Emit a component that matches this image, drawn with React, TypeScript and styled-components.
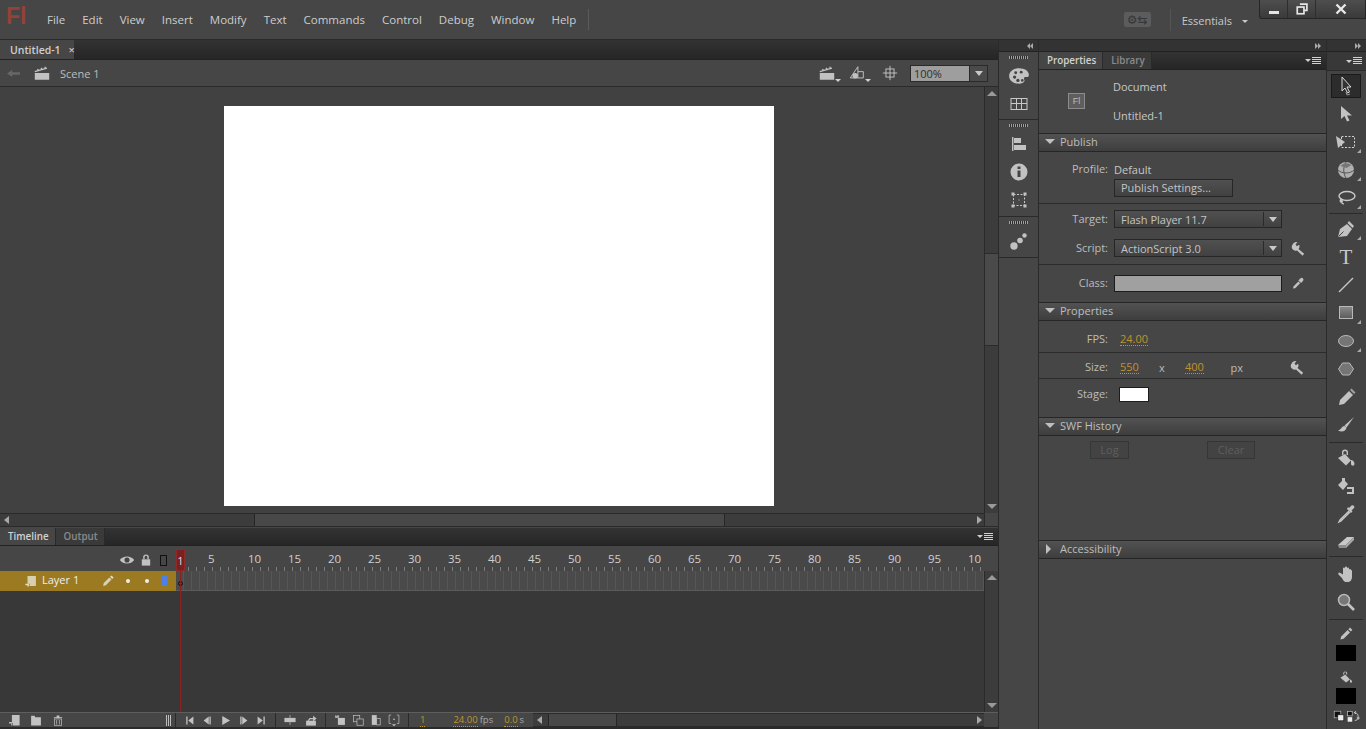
import React, { FC, ReactNode } from 'react';
import styled, { createGlobalStyle } from 'styled-components';

const GlobalStyle = createGlobalStyle`
    html, body {
        margin: 0;
        padding: 0;
        background: #464646;
        overflow: hidden;
    }
    * {
        box-sizing: border-box;
    }
`;

const FONT = `"Open Sans", "Noto Sans", sans-serif`;
const TEXT = '#c6c6c6';
const AMBER = '#c0922e';

const Root = styled.div`
    width: 1366px;
    height: 729px;
    display: flex;
    flex-direction: column;
    overflow: hidden;
    background: #464646;
    color: ${TEXT};
    font: 12px ${FONT};
`;

/* ---------- drawings ---------- */

const Svg = styled.svg<{ $size?: number }>`
    position: relative;
    width: ${(p) => p.$size ?? 20}px;
    height: ${(p) => p.$size ?? 20}px;
    display: block;
    flex: none;
    fill: #c2c2c2;
`;

const icons: Record<string, ReactNode> = {
    select: <><path d="M6 1v14l3-3 2.500 5 2-1-2.500-5h4z" fill="#333" stroke="#d8d8d8" /><path d="M10 16l1 3 3-1" fill="none" stroke="#999" /></>,
    subselect: <path d="M5 2v13l3.500-3 2.500 5.500 2.500-1-2.500-5h5z" />,
    transform: <><path d="M0 4l9 6-7 6z" /><rect x="5.500" y="4.500" width="13" height="11" fill="none" stroke="#d0d0d0" strokeDasharray="2 1.500" /></>,
    sphere: <><circle cx="10" cy="10" r="8" fill="#b0b0b0" /><path d="M2 10c4 4 12 4 16 0M10 2c-3 5-3 11 0 16" fill="none" stroke="#555" strokeWidth="1" /><path d="M4.500 6a8 8 0 0 1 11-1l-5 3z" fill="#777" /></>,
    lasso: <><ellipse cx="11" cy="8" rx="8" ry="4.500" fill="none" stroke="#c8c8c8" strokeWidth="1.400" /><path d="M5 11c-2 2 0 4 1 3s-1-3-1-3c0 3 1 5 3 5" fill="none" stroke="#c8c8c8" strokeWidth="1.200" /></>,
    pen: <><path d="M2 18l2-8 7-5 5 5-5 7z" /><path d="M13 2l5 5-1.500 2-5-5z" /><path d="M2.500 17.500l5-5" stroke="#444" /></>,
    line: <path d="M3 17L17 3" stroke="#c4c4c4" strokeWidth="1.400" />,
    rect: <><defs><linearGradient id="rectFill" x1="0" y1="0" x2="0" y2="1"><stop offset="0" stopColor="#8a8a8a" /><stop offset="1" stopColor="#5c5c5c" /></linearGradient></defs><rect x="3.500" y="3.500" width="13" height="12" fill="url(#rectFill)" stroke="#b8b8b8" /></>,
    oval: <ellipse cx="10" cy="10" rx="7.500" ry="5.500" fill="#757575" stroke="#b8b8b8" />,
    poly: <path d="M6.500 4h7l4 6-4 6h-7l-4-6z" fill="#757575" stroke="#b8b8b8" />,
    pencil: <><path d="M3 18l1-5L13 4l4 4-9 9z" /><path d="M14 3l1.500-1.500 4 4L18 7z" fill="#a0a0a0" /></>,
    brush: <><path d="M18 2L8.500 10.500l2 2z" /><path d="M8.500 11c-3 0-3 3.500-6.500 4.500 3.500 2 8 1 8.500-3z" /></>,
    bucket: <><path d="M9 1.500a3 3 0 0 1 3 3V7h-1.400V4.500a1.600 1.600 0 0 0-3.200 0V7H6V4.500a3 3 0 0 1 3-3z" /><path d="M2 10l7-4 6 6.500-5 5z" /><path d="M15 12c2 0 3.500 2 3.500 4a1.700 1.700 0 0 1-3.500 0z" /></>,
    ink: <><path d="M6 2h3v3l3 3-5 6-5-5 4-4z" /><path d="M11 11h7v7h-7v-2h5v-3h-5z" /></>,
    dropper: <><path d="M13 7l-9 9-1 2 2-1 9-9" fill="none" stroke="#c8c8c8" strokeWidth="1.300" /><path d="M11 5l4 4 1.500-1.500-1-1L18 4a1.800 1.800 0 0 0-2.500-2.500L13 4l-1-1z" /></>,
    eraser: <><path d="M2 13L11 5h7l-8 8z" fill="#c8c8c8" /><path d="M2 13h8v3H3z" fill="#8c8c8c" /><path d="M10 13l8-8v3l-8 8z" fill="#a8a8a8" /></>,
    hand: <path d="M3.500 8.500l3.500 2V4.500a1 1 0 0 1 2 0v-1a1 1 0 0 1 2 0v1a1 1 0 0 1 2 0V6a1 1 0 0 1 2 0c1 0 1 1 1 1v6c0 3-2 5-4 5H10c-2 0-3-2-4-4l-3.500-3.500c-.7-1 .2-2.200 1-2z" />,
    zoom: <><circle cx="8" cy="8" r="5.500" fill="#777" stroke="#b8b8b8" strokeWidth="1.500" /><path d="M12 12l6 6" stroke="#c4c4c4" strokeWidth="2.600" /></>,
    penSmall: <><path d="M3 17l1-4L12 5l3 3-8 8z" /><path d="M13 4l2-2 3 3-2 2z" /></>,
    bucketSmall: <><path d="M9 3a2.500 2.500 0 0 1 2.500 2.500V7h-1.200V5.500a1.300 1.300 0 0 0-2.600 0V7H6.500V5.500A2.500 2.500 0 0 1 9 3z" /><path d="M3 11l6-4 6 6-5 4z" /><path d="M15 13c1.500 0 2.500 1.500 2.500 3a1.200 1.200 0 0 1-2.500 0z" /></>,
    palette: <><path d="M10 3c5 0 9 2.500 9 6 0 2-2 2-3 2-2 0-1.500 2-1 3 0 2-3 3-5 3-5 0-9-3-9-7s4-7 9-7z" /><circle cx="6" cy="11" r="1.500" fill="#444" /><circle cx="9" cy="14" r="1.500" fill="#444" /><circle cx="13" cy="14" r="1.200" fill="#444" /><circle cx="7" cy="7" r="1.300" fill="#444" /><circle cx="12" cy="6.500" r="1.300" fill="#444" /></>,
    swatches: <><rect x="2" y="4.500" width="16" height="11" fill="none" stroke="#c8c8c8" /><path d="M2 9.500h16M7.500 4.500v11M12.500 4.500v11" stroke="#c8c8c8" /></>,
    align: <><rect x="3" y="3" width="1.400" height="14" /><rect x="5" y="4" width="7" height="5" /><rect x="5" y="11" width="12" height="5" /></>,
    info: <><circle cx="10" cy="10" r="8.500" /><rect x="8.500" y="8.500" width="3" height="6.500" fill="#444" /><rect x="8.500" y="4.500" width="3" height="2.500" fill="#444" /></>,
    bounds: <><rect x="4.500" y="4.500" width="11" height="11" fill="none" stroke="#c8c8c8" strokeDasharray="2 1.500" /><rect x="2.500" y="2.500" width="3" height="3" /><rect x="14.500" y="2.500" width="3" height="3" /><rect x="2.500" y="14.500" width="3" height="3" /><rect x="14.500" y="14.500" width="3" height="3" /><rect x="9.500" y="9.500" width="1" height="1" /></>,
    motion: <><circle cx="5" cy="15" r="3.700" /><circle cx="11" cy="9.500" r="2.800" /><circle cx="15.500" cy="4.500" r="2.200" /></>,
    clapper: <><rect x="2" y="10" width="16" height="7.500" /><path d="M2 8.500L15.500 4.500M5 5.500l1 1.800M9 4.300l1 1.800M13 3l1 1.800" stroke="#c2c2c2" strokeWidth="1.400" /></>,
    back: <path d="M0 10l8-5.500V8h12v4H8v3.500z" fill="#676767" />,
    wrench: <path d="M2 5a5 5 0 0 1 6.500-3.200L6 4.500 7.800 7l3-2a5 5 0 0 1-.8 5.500l7.500 6.500-2 2.500-7.500-7A5 5 0 0 1 2 5z" />,
    dropSmall: <><path d="M3 18l.5-3 7-7 2.500 2.500-7 7z" /><path d="M10.500 6.500L14 3a2.600 2.600 0 0 1 3.500 3.500l-3 3.500z" /></>,
    crosshair: <><rect x="5.500" y="5.500" width="9" height="9" fill="none" stroke="#c8c8c8" /><path d="M10 2v16M2 10h16" stroke="#c8c8c8" /></>,
    snap: <><path d="M2.500 15.500L11 3v12.500z" fill="none" stroke="#c8c8c8" /><circle cx="8" cy="13" r="3" /><path d="M11 8.500h6v7h-6" fill="none" stroke="#c8c8c8" /></>,
    eye: <><path d="M1 10c4-6 14-6 18 0-4 6-14 6-18 0z" /><circle cx="10" cy="10" r="3.200" fill="#444" /></>,
    lock: <><path d="M6 9V6a4 4 0 0 1 8 0v3h-2V6a2 2 0 0 0-4 0v3z" /><rect x="4" y="9" width="12" height="9" /></>,
    layer: <><path d="M5 3h12v14H8v-3H5z" fill="#d8cfae" /><path d="M2 14h5v4H5v-2H2z" fill="#e4ddc4" /></>,
    pencilTl: <><path d="M3 17l1-4 8-8 3 3-8 8z" fill="#d8d0b8" /><path d="M13 4l2-2 3 3-2 2z" fill="#e4ddc8" /></>,
    newLayer: <><path d="M7 3h11v15H8v-4H7z" /><path d="M3 13h4v5H6v-3H3z" /></>,
    folder: <path d="M3 4h5l1 2h8v12H3z" />,
    trash: <><path d="M4 6h12v1.500H4zM8 3.500h4V6H8z" /><path d="M5 8.500h10V18H5zM8 10v6.500M12 10v6.500" fill="none" stroke="#c2c2c2" /></>,
    toStart: <path d="M5 4h2v12H5zM16 4v12L8 10z" />,
    stepBack: <path d="M13 4h2v12h-2zM12 4v12L4 10z" />,
    play: <path d="M5 3l12 7-12 7z" />,
    stepFwd: <path d="M5 4h2v12H5zM8 4v12l8-6z" />,
    toEnd: <path d="M13 4h2v12h-2zM4 4v12l8-6z" />,
    center: <><path d="M10 3v14" stroke="#c2c2c2" /><rect x="2" y="7" width="16" height="6" /></>,
    loop: <><path d="M3 11h14v7H3z" /><path d="M5 11l3-4h5V4l5 4-5 4V9H9l-2 2z" /></>,
    onion: <><path d="M3 3l2 1 3-1 1 2-1 2H3z" fill="#aaa" /><rect x="7" y="7" width="10" height="10" /></>,
    onionLine: <><rect x="3.500" y="3.500" width="9" height="9" fill="none" stroke="#c2c2c2" /><rect x="8.500" y="8.500" width="9" height="9" fill="#464646" stroke="#c2c2c2" /></>,
    editMulti: <><rect x="4" y="3" width="7" height="14" /><rect x="11" y="8" width="5" height="9" fill="none" stroke="#c2c2c2" /></>,
    markers: <><path d="M6 3H3v12h3M14 3h3v12h-3" fill="none" stroke="#c2c2c2" /><rect x="9" y="8" width="2" height="2" /><path d="M7 16h6l-3 3z" /></>,
    restore: <><path d="M7 3h10v9h-4" fill="none" stroke="#e6e6e6" strokeWidth="2.400" /><rect x="3.200" y="7.200" width="9.600" height="9.600" fill="none" stroke="#e6e6e6" strokeWidth="2.400" /></>,
    swapColors: <><rect x="2" y="2" width="11" height="11" fill="#111" stroke="#ccc" /><rect x="8" y="8" width="10" height="10" fill="#eee" stroke="#111" /></>,
    swapArrows: <><rect x="1" y="2" width="7" height="7" fill="#111" stroke="#ccc" /><rect x="1" y="11" width="7" height="7" fill="#eee" /><path d="M11 4c5 0 7 4 6 8M12 16c3 0 4-1 5-4M14 2l-3 2 3 2M15 12h4l-2 3" fill="none" stroke="#ccc" strokeWidth="1.400" /></>,
};

const Icon: FC<{ name: string; size?: number }> = ({ name, size }) => (
    <Svg viewBox="0 0 20 20" $size={size}>{icons[name]}</Svg>
);

/* ---------- menu bar ---------- */

const MenuBar = styled.div`
    height: 40px;
    flex: none;
    display: flex;
    align-items: flex-start;
    background: #464646;
    border-bottom: 1px solid #2a2a2a;
`;

const Logo = styled.span`
    width: 47px;
    padding: 3px 0 0 6px;
    font: bold 23px "Liberation Sans", sans-serif;
    color: #944236;
`;

const Menu = styled.nav`
    display: flex;
    gap: 17px;
    height: 39px;
    align-items: center;
    padding-right: 12px;
`;

const MenuItem = styled.span`
    font-size: 11.500px;
    color: #cdcdcd;
`;

const MenuRule = styled.i`
    width: 1px;
    height: 21px;
    margin-top: 9px;
    background: #5a5a5a;
`;

const MenuSpacer = styled.div`
    flex: 1;
`;

const SyncBadge = styled.div`
    width: 27px;
    height: 15px;
    margin: 12px 19px 0 0;
    border-radius: 2px;
    background: #5c5c5c;
    display: flex;
    align-items: center;
    justify-content: center;
    color: #353535;
    font: 12px "DejaVu Sans", sans-serif;
`;

const Workspaces = styled.div`
    display: flex;
    align-items: center;
    gap: 10px;
    height: 22px;
    margin: 9px 11px 0 0;
    padding-left: 11px;
    border-left: 1px solid #555;
    font-size: 11px;
    color: #c8c8c8;
`;

const SmallCaret = styled.i`
    width: 0;
    height: 0;
    margin-top: 3px;
    border: 3px solid transparent;
    border-top: 3px solid #c8c8c8;
    border-bottom: none;
`;

const WindowButtons = styled.div`
    display: flex;
    height: 19px;
    border: 1px solid #262626;
    border-top: none;
    border-radius: 0 0 0 3px;
    background: linear-gradient(#4e4e4e, #3a3a3a);
`;

const WindowButton = styled.div<{ $wide?: boolean }>`
    width: ${(p) => (p.$wide ? 49 : 28)}px;
    display: flex;
    align-items: center;
    justify-content: center;
    border-right: 1px solid #2e2e2e;
    &:last-child {
        border-right: none;
    }
`;

const MinGlyph = styled.i`
    width: 10px;
    height: 3px;
    margin-top: 6px;
    background: #e4e4e4;
`;

/* ---------- left column ---------- */

const Workspace = styled.div`
    flex: 1;
    min-height: 0;
    display: flex;
`;

const DocColumn = styled.main`
    width: 999px;
    flex: none;
    display: flex;
    flex-direction: column;
    border-right: 1px solid #2a2a2a;
`;

const TabStrip = styled.div<{ $height: number }>`
    height: ${(p) => p.$height}px;
    flex: none;
    display: flex;
    align-items: stretch;
    background: linear-gradient(#333, #262626);
    border-bottom: 1px solid #222;
`;

const DocTab = styled.div`
    width: 74px;
    padding-left: 10px;
    display: flex;
    align-items: center;
    gap: 8px;
    background: #464646;
    font-size: 10.500px;
    font-weight: 600;
    white-space: nowrap;
    color: #cfcfcf;
`;

const TabClose = styled.span`
    font-size: 11px;
    color: #c4c4c4;
`;

const SceneBar = styled.div`
    height: 27px;
    flex: none;
    display: flex;
    align-items: center;
    padding: 0 10px 0 7px;
    background: #464646;
    border-bottom: 1px solid #2a2a2a;
    font-size: 11px;
`;

const BackSlot = styled.span`
    display: block;
    margin-right: 13px;
`;

const SceneName = styled.span`
    margin-left: 9px;
    color: #bdbdbd;
`;

const SceneTools = styled.div`
    margin-left: auto;
    display: flex;
    align-items: center;
    gap: 10px;
`;

const IconCaret = styled.span<{ $after: number }>`
    position: relative;
    display: block;
    margin-right: ${(p) => p.$after}px;
    &::after {
        content: '';
        position: absolute;
        right: -5px;
        bottom: 0;
        border: 3px solid transparent;
        border-top: 3px solid #d0d0d0;
        border-bottom: none;
    }
`;

const ZoomCombo = styled.div`
    width: 78px;
    height: 17px;
    margin-left: 1px;
    display: flex;
    border: 1px solid #2a2a2a;
    background: #9e9e9e;
    color: #2e2e2e;
    font-size: 11px;
    line-height: 15px;
    padding-left: 3px;
`;

const ZoomButton = styled.div`
    width: 18px;
    margin-left: auto;
    display: flex;
    align-items: center;
    justify-content: center;
    background: #4a4a4a;
    border-left: 1px solid #2a2a2a;
`;

const DownCaret = styled.i<{ $color?: string }>`
    width: 0;
    height: 0;
    border: 4px solid transparent;
    border-top: 5px solid ${(p) => p.$color ?? '#c8c8c8'};
    border-bottom: none;
`;

const StageRow = styled.div`
    height: 426px;
    flex: none;
    display: flex;
    background: #414141;
`;

const Pasteboard = styled.div`
    flex: 1;
    padding: 19px 0 0 224px;
`;

const Artboard = styled.div`
    width: 550px;
    height: 400px;
    background: #fff;
`;

const VScroll = styled.div`
    width: 14px;
    flex: none;
    display: flex;
    flex-direction: column;
    align-items: center;
    justify-content: space-between;
    padding: 4px 0;
    background: #3c3c3c;
    border-left: 1px solid #2a2a2a;
    position: relative;
`;

const VThumb = styled.div`
    position: absolute;
    left: 0;
    right: 0;
    top: 166px;
    height: 93px;
    background: #4a4a4a;
    border-top: 1px solid #2c2c2c;
    border-bottom: 1px solid #2c2c2c;
`;

const UpTri = styled.i`
    width: 0;
    height: 0;
    border: 5px solid transparent;
    border-bottom: 5px solid #9a9a9a;
    border-top: none;
`;

const DownTri = styled.i`
    width: 0;
    height: 0;
    border: 5px solid transparent;
    border-top: 5px solid #9a9a9a;
    border-bottom: none;
`;

const HScroll = styled.div`
    height: 14px;
    flex: 1;
    display: flex;
    align-items: center;
    background: #3c3c3c;
    border-top: 1px solid #2a2a2a;
    border-bottom: 1px solid #2a2a2a;
    padding: 0 2px 0 4px;
`;

const HThumb = styled.div<{ $offset: number; $width: number }>`
    width: ${(p) => p.$width}px;
    height: 12px;
    margin-left: ${(p) => p.$offset}px;
    background: #484848;
    border-left: 1px solid #262626;
    border-right: 1px solid #262626;
`;

const LeftTri = styled.i`
    width: 0;
    height: 0;
    flex: none;
    border: 4px solid transparent;
    border-right: 5px solid #a8a8a8;
    border-left: none;
`;

const RightTri = styled.i`
    width: 0;
    height: 0;
    flex: none;
    margin-left: auto;
    border: 4px solid transparent;
    border-left: 5px solid #a8a8a8;
    border-right: none;
`;

const HScrollRow = styled.div`
    height: 14px;
    flex: none;
    display: flex;
    background: #464646;
    border-bottom: 1px solid #2a2a2a;
`;

const Corner = styled.div`
    width: 14px;
    flex: none;
    background: #464646;
    border-left: 1px solid #2a2a2a;
`;

const StageGap = styled.div`
    height: 1px;
    flex: none;
    background: #464646;
`;

/* ---------- timeline ---------- */

const PanelTab = styled.div<{ $active?: boolean }>`
    padding: 0 6px 0 8px;
    display: flex;
    align-items: center;
    background: ${(p) => (p.$active ? '#464646' : '#3a3a3a')};
    border-right: 1px solid #2a2a2a;
    font-size: 9.800px;
    font-weight: 600;
    color: ${(p) => (p.$active ? '#d2d2d2' : '#8a8a8a')};
`;

const PanelMenu = styled.div`
    margin-left: auto;
    padding: 0 5px;
    display: flex;
    align-items: center;
`;

const MenuLines = styled.i`
    width: 9px;
    height: 8px;
    margin-left: 1px;
    background: repeating-linear-gradient(#d0d0d0 0 1px, transparent 1px 2px);
`;

const MenuTri = styled.i`
    width: 0;
    height: 0;
    border: 3px solid transparent;
    border-top: 3px solid #d0d0d0;
    border-bottom: none;
`;

const TimelineBody = styled.div`
    flex: 1;
    min-height: 0;
    position: relative;
    display: flex;
    flex-direction: column;
    background: #383838;
`;

const RulerRow = styled.div`
    height: 25px;
    flex: none;
    display: flex;
    background: #464646;
`;

const LayerHead = styled.div`
    width: 176px;
    flex: none;
    display: flex;
    align-items: center;
    justify-content: flex-end;
    gap: 4px;
    padding: 3px 9px 0 0;
`;

const OutlineBox = styled.i`
    width: 7px;
    height: 11px;
    margin-left: 3px;
    border: 1px solid #111;
`;

const Ruler = styled.div`
    width: 808px;
    overflow: hidden;
    display: flex;
    color: #cfcfcf;
    font-size: 11.500px;
    line-height: 26px;
    background: repeating-linear-gradient(90deg, transparent 0 4px, #7c7c7c 4px 5px, transparent 5px 8px) 0 21px / 100% 4px no-repeat;
`;

const RulerMark = styled.span<{ $first?: boolean }>`
    flex: none;
    width: ${(p) => (p.$first ? 32 : 40)}px;
`;

const TrackArea = styled.div`
    flex: 1;
    min-height: 0;
    display: flex;
`;

const TrackList = styled.div`
    flex: 1;
`;

const LayerRow = styled.div`
    height: 20px;
    display: flex;
`;

const LayerName = styled.div`
    width: 176px;
    flex: none;
    display: flex;
    align-items: center;
    padding: 0 0 1px 24px;
    background: #9b7a22;
    color: #eee;
    font-size: 11px;
`;

const LayerLabel = styled.span`
    width: 59px;
    margin: 0 0 2px 4px;
`;

const Dot = styled.i<{ $gap: number }>`
    width: 4px;
    height: 4px;
    margin-left: ${(p) => p.$gap}px;
    border-radius: 50%;
    background: #eee;
`;

const OutlineChip = styled.i`
    width: 5px;
    height: 10px;
    margin-left: 13px;
    background: #4f80e8;
`;

const Frames = styled.div`
    width: 808px;
    border-bottom: 1px solid #5a5a5a;
    background: repeating-linear-gradient(90deg, #4a4a4a 0 7px, #565656 7px 8px);
`;

const FirstKey = styled.i`
    display: block;
    width: 5px;
    height: 5px;
    margin: 10px 0 0 2px;
    border-radius: 50%;
    border: 1px solid #111;
`;

const PlayHead = styled.div`
    position: absolute;
    left: 176px;
    top: 3px;
    width: 9px;
    height: 22px;
    background: #7a2020;
    border: 1px solid #8e2a2a;
    color: #ddd;
    font-size: 11px;
    line-height: 21px;
    text-align: center;
    &::after {
        content: '';
        position: absolute;
        left: 3px;
        top: 20px;
        width: 1px;
        height: 142px;
        background: #8a2020;
    }
`;

const Footer = styled.div`
    height: 15px;
    flex: none;
    display: flex;
    align-items: center;
    background: #464646;
    border-top: 1px solid #5e5e5e;
`;

const FooterLeft = styled.div`
    width: 176px;
    height: 100%;
    flex: none;
    display: flex;
    align-items: center;
    gap: 8px;
    padding-left: 7px;
    border-right: 1px solid #2a2a2a;
`;

const Grip = styled.i`
    width: 5px;
    height: 11px;
    margin-left: auto;
    margin-right: 4px;
    background: repeating-linear-gradient(90deg, #bdbdbd 0 1px, transparent 1px 2px);
`;

const FooterGroup = styled.div<{ $gap: number; $pad: number }>`
    height: 100%;
    display: flex;
    align-items: center;
    gap: ${(p) => p.$gap}px;
    padding: 0 ${(p) => p.$pad}px;
    border-right: 1px solid #2a2a2a;
`;

const HotText = styled.span<{ $left?: number }>`
    margin-left: ${(p) => p.$left ?? 0}px;
    color: ${AMBER};
    border-bottom: 1px dotted ${AMBER};
    line-height: 12px;
`;

const Unit = styled.span`
    color: #a8a8a8;
    line-height: 12px;
    margin-left: 2px;
`;

const FrameInfo = styled.div`
    width: 124px;
    height: 100%;
    flex: none;
    display: flex;
    align-items: center;
    padding-left: 11px;
    font-size: 9.500px;
`;

const Bottom = styled.div`
    height: 2px;
    flex: none;
    background: #2a2a2a;
`;

/* ---------- icon dock ---------- */

const CollapseStrip = styled.div`
    height: 12px;
    flex: none;
    display: flex;
    align-items: center;
    justify-content: flex-end;
    padding-right: 5px;
    background: #333;
    border-bottom: 1px solid #222;
`;

const Tiny = styled.i<{ $left?: boolean }>`
    width: 0;
    height: 0;
    border: 3px solid transparent;
    ${(p) => (p.$left
        ? 'border-right: 3px solid #aaa; border-left: none;'
        : 'border-left: 3px solid #aaa; border-right: none;')}
`;

const Dock = styled.aside`
    width: 40px;
    flex: none;
    display: flex;
    flex-direction: column;
    border-right: 1px solid #2a2a2a;
`;

const DockGroup = styled.div<{ $height: number }>`
    height: ${(p) => p.$height}px;
    flex: none;
    display: flex;
    flex-direction: column;
    align-items: center;
    border-bottom: 1px solid #2a2a2a;
    padding-top: 4px;
`;

const Gripper = styled.i`
    width: 19px;
    height: 3px;
    margin-bottom: 3px;
    flex: none;
    background: repeating-linear-gradient(90deg, #a0a0a0 0 1px, #2c2c2c 1px 2px);
`;

const DockItem = styled.div`
    height: 28px;
    display: flex;
    align-items: center;
`;

/* ---------- properties ---------- */

const Panel = styled.section`
    width: 288px;
    flex: none;
    display: flex;
    flex-direction: column;
    border-right: 1px solid #2a2a2a;
`;

const DocSummary = styled.div`
    height: 63px;
    flex: none;
    display: flex;
    align-items: center;
    padding: 0 0 2px 29px;
`;

const FileBadge = styled.div`
    width: 17px;
    height: 16px;
    border: 1px solid #8c8c8c;
    background: #5e5e5e;
    color: #bbb;
    font: 9px/14px "Liberation Sans", sans-serif;
    text-align: center;
`;

const DocLines = styled.div`
    margin-left: 28px;
    display: flex;
    flex-direction: column;
    gap: 12px;
    font-size: 11px;
    line-height: 17px;
`;

const SectionHead = styled.div`
    height: 19px;
    flex: none;
    display: flex;
    align-items: center;
    gap: 4px;
    padding: 0 0 2px 5px;
    background: linear-gradient(#525252, #3e3e3e);
    border-top: 1px solid #262626;
    border-bottom: 1px solid #262626;
    font-size: 11px;
    color: #bebebe;
`;

const OpenTri = styled.i`
    width: 0;
    height: 0;
    margin: 0 1px;
    border: 5px solid transparent;
    border-top: 5px solid #c0c0c0;
    border-bottom: none;
`;

const ClosedTri = styled.i`
    width: 0;
    height: 0;
    margin: 0 5px 0 2px;
    border: 5px solid transparent;
    border-left: 5px solid #c0c0c0;
    border-right: none;
`;

const Block = styled.div<{ $height: number; $top: number; $gap?: number; $last?: boolean }>`
    height: ${(p) => p.$height}px;
    flex: none;
    display: flex;
    flex-direction: column;
    gap: ${(p) => p.$gap ?? 0}px;
    padding-top: ${(p) => p.$top}px;
    border-bottom: ${(p) => (p.$last ? 'none' : '1px solid #2c2c2c')};
`;

const FieldRow = styled.div<{ $height?: number }>`
    display: flex;
    align-items: center;
    flex: none;
    height: ${(p) => p.$height ?? 18}px;
    font-size: 11px;
`;

const FieldLabel = styled.span`
    width: 69px;
    flex: none;
    text-align: right;
    margin: 0 6px 2px 0;
    color: #bcbcbc;
`;

const PlainButton = styled.div<{ $width: number; $disabled?: boolean }>`
    width: ${(p) => p.$width}px;
    height: 18px;
    border: 1px solid ${(p) => (p.$disabled ? '#363636' : '#262626')};
    background: ${(p) => (p.$disabled ? '#434343' : 'linear-gradient(#505050, #414141)')};
    color: ${(p) => (p.$disabled ? '#5e5e5e' : '#c4c4c4')};
    font-size: 11px;
    line-height: 16px;
    padding-left: ${(p) => (p.$disabled ? 0 : 6)}px;
    text-align: ${(p) => (p.$disabled ? 'center' : 'left')};
`;

const Select = styled.div`
    width: 168px;
    height: 18px;
    display: flex;
    align-items: center;
    padding-left: 6px;
    border: 1px solid #262626;
    background: linear-gradient(#505050, #414141);
    color: #c4c4c4;
    font-size: 11px;
`;

const SelectCaret = styled.div`
    margin-left: auto;
    width: 18px;
    height: 14px;
    display: flex;
    align-items: center;
    justify-content: center;
    border-left: 1px solid #2a2a2a;
`;

const SideIcon = styled.span<{ $left?: number }>`
    display: block;
    margin-left: ${(p) => p.$left ?? 9}px;
`;

const ClassField = styled.div`
    width: 168px;
    height: 17px;
    border: 1px solid #1c1c1c;
    background: #a0a0a0;
`;

const SizeSep = styled.span<{ $width: number }>`
    width: ${(p) => p.$width}px;
    text-align: center;
    color: #bcbcbc;
`;

const StageSwatch = styled.div`
    width: 30px;
    height: 15px;
    margin-left: 5px;
    border: 1px solid #1c1c1c;
    background: #fff;
`;

const HistoryBody = styled.div`
    height: 104px;
    flex: none;
    display: flex;
    padding: 5px 0 0 51px;
    gap: 78px;
`;

/* ---------- tools ---------- */

const Tools = styled.aside`
    flex: 1;
    min-width: 0;
    display: flex;
    flex-direction: column;
    background: #434343;
`;

const ToolsHead = styled.div`
    height: 19px;
    flex: none;
    display: flex;
    justify-content: flex-end;
    align-items: center;
    padding-right: 4px;
    background: #383838;
    border-bottom: 1px solid #2a2a2a;
`;

const ToolGroup = styled.div<{ $height: number; $top: number; $last?: boolean }>`
    height: ${(p) => p.$height}px;
    flex: none;
    display: flex;
    flex-direction: column;
    align-items: center;
    padding-top: ${(p) => p.$top}px;
    border-bottom: ${(p) => (p.$last ? 'none' : '1px solid #2a2a2a')};
    margin: 0 3px 0 2px;
`;

const Tool = styled.div<{ $active?: boolean; $corner?: boolean }>`
    position: relative;
    width: 30px;
    height: 28px;
    flex: none;
    display: flex;
    align-items: center;
    justify-content: center;
    ${(p) => p.$active && `
        &::before {
            content: '';
            position: absolute;
            inset: 2px 0;
            background: #2c2c2c;
            border: 1px solid #1a1a1a;
        }
    `}
    ${(p) => p.$corner && `
        &::after {
            content: '';
            position: absolute;
            right: 0;
            bottom: 3px;
            border-left: 4px solid transparent;
            border-bottom: 4px solid #aaa;
        }
    `}
`;

const SerifT = styled.span`
    font: 21px "Liberation Serif", serif;
    color: #c8c8c8;
`;

const ColorSlot = styled.div`
    height: 20px;
    flex: none;
    display: flex;
    align-items: center;
`;

const ColorChip = styled.div`
    width: 20px;
    height: 16px;
    flex: none;
    background: #000;
    margin: 1px 0 6px;
`;

const SwapRow = styled.div`
    display: flex;
    gap: 2px;
`;

const RULER = [1, 5, 10, 15, 20, 25, 30, 35, 40, 45, 50, 55, 60, 65, 70, 75, 80, 85, 90, 95, 10];
const MENUS = ['File', 'Edit', 'View', 'Insert', 'Modify', 'Text', 'Commands', 'Control', 'Debug', 'Window', 'Help'];

const App: FC = () => {
    return (
        <Root>
            <GlobalStyle />
            <MenuBar>
                <Logo>Fl</Logo>
                <Menu>
                    {MENUS.map((item) => <MenuItem key={item}>{item}</MenuItem>)}
                </Menu>
                <MenuRule />
                <MenuSpacer />
                <SyncBadge>⚙⇆</SyncBadge>
                <Workspaces>Essentials <SmallCaret /></Workspaces>
                <WindowButtons>
                    <WindowButton><MinGlyph /></WindowButton>
                    <WindowButton><Icon name="restore" size={14} /></WindowButton>
                    <WindowButton $wide><svg width="12" height="12" viewBox="0 0 12 12"><path d="M1.500 1.500l9 9M10.500 1.500l-9 9" stroke="#e8e8e8" strokeWidth="2.400" /></svg></WindowButton>
                </WindowButtons>
            </MenuBar>
            <Workspace>
                <DocColumn>
                    <TabStrip $height={20}>
                        <DocTab>Untitled-1 <TabClose>×</TabClose></DocTab>
                    </TabStrip>
                    <SceneBar>
                        <BackSlot><Icon name="back" size={13} /></BackSlot>
                        <Icon name="clapper" size={18} />
                        <SceneName>Scene 1</SceneName>
                        <SceneTools>
                            <IconCaret $after={2}><Icon name="clapper" size={18} /></IconCaret>
                            <IconCaret $after={5}><Icon name="snap" size={18} /></IconCaret>
                            <Icon name="crosshair" size={18} />
                            <ZoomCombo>100%<ZoomButton><DownCaret /></ZoomButton></ZoomCombo>
                        </SceneTools>
                    </SceneBar>
                    <StageRow>
                        <Pasteboard><Artboard /></Pasteboard>
                        <VScroll>
                            <UpTri />
                            <VThumb />
                            <DownTri />
                        </VScroll>
                    </StageRow>
                    <HScrollRow>
                        <HScroll>
                            <LeftTri />
                            <HThumb $offset={245} $width={471} />
                            <RightTri />
                        </HScroll>
                        <Corner />
                    </HScrollRow>
                    <StageGap />
                    <TabStrip $height={18}>
                        <PanelTab $active>Timeline</PanelTab>
                        <PanelTab>Output</PanelTab>
                        <PanelMenu><MenuTri /><MenuLines /></PanelMenu>
                    </TabStrip>
                    <TimelineBody>
                        <RulerRow>
                            <LayerHead>
                                <Icon name="eye" size={16} />
                                <Icon name="lock" size={14} />
                                <OutlineBox />
                            </LayerHead>
                            <Ruler>
                                {RULER.map((mark, i) => <RulerMark key={i} $first={i === 0}>{mark}</RulerMark>)}
                            </Ruler>
                        </RulerRow>
                        <TrackArea>
                            <TrackList>
                                <LayerRow>
                                    <LayerName>
                                        <Icon name="layer" size={14} />
                                        <LayerLabel>Layer 1</LayerLabel>
                                        <Icon name="pencilTl" size={14} />
                                        <Dot $gap={11} />
                                        <Dot $gap={15} />
                                        <OutlineChip />
                                    </LayerName>
                                    <Frames><FirstKey /></Frames>
                                </LayerRow>
                            </TrackList>
                            <VScroll>
                                <UpTri />
                                <DownTri />
                            </VScroll>
                        </TrackArea>
                        <PlayHead>1</PlayHead>
                    </TimelineBody>
                    <Footer>
                        <FooterLeft>
                            <Icon name="newLayer" size={14} />
                            <Icon name="folder" size={14} />
                            <Icon name="trash" size={14} />
                            <Grip />
                        </FooterLeft>
                        <FooterGroup $gap={5} $pad={7}>
                            <Icon name="toStart" size={13} />
                            <Icon name="stepBack" size={13} />
                            <Icon name="play" size={13} />
                            <Icon name="stepFwd" size={13} />
                            <Icon name="toEnd" size={13} />
                        </FooterGroup>
                        <FooterGroup $gap={7} $pad={7}>
                            <Icon name="center" size={14} />
                            <Icon name="loop" size={14} />
                        </FooterGroup>
                        <FooterGroup $gap={4} $pad={7}>
                            <Icon name="onion" size={14} />
                            <Icon name="onionLine" size={14} />
                            <Icon name="editMulti" size={14} />
                            <Icon name="markers" size={14} />
                        </FooterGroup>
                        <FrameInfo>
                            <HotText>1</HotText>
                            <HotText $left={28}>24.00</HotText>
                            <Unit>fps</Unit>
                            <HotText $left={11}>0.0</HotText>
                            <Unit>s</Unit>
                        </FrameInfo>
                        <HScroll>
                            <LeftTri />
                            <HThumb $offset={6} $width={69} />
                            <RightTri />
                        </HScroll>
                        <Corner />
                    </Footer>
                    <Bottom />
                </DocColumn>

                <Dock>
                    <CollapseStrip><Tiny $left /><Tiny $left /></CollapseStrip>
                    <DockGroup $height={68}>
                        <Gripper />
                        <DockItem><Icon name="palette" size={22} /></DockItem>
                        <DockItem><Icon name="swatches" size={20} /></DockItem>
                    </DockGroup>
                    <DockGroup $height={97}>
                        <Gripper />
                        <DockItem><Icon name="align" size={20} /></DockItem>
                        <DockItem><Icon name="info" size={20} /></DockItem>
                        <DockItem><Icon name="bounds" size={20} /></DockItem>
                    </DockGroup>
                    <DockGroup $height={41}>
                        <Gripper />
                        <DockItem><Icon name="motion" size={20} /></DockItem>
                    </DockGroup>
                </Dock>

                <Panel>
                    <CollapseStrip><Tiny /><Tiny /></CollapseStrip>
                    <TabStrip $height={18}>
                        <PanelTab $active>Properties</PanelTab>
                        <PanelTab>Library</PanelTab>
                        <PanelMenu><MenuTri /><MenuLines /></PanelMenu>
                    </TabStrip>
                    <DocSummary>
                        <FileBadge>Fl</FileBadge>
                        <DocLines>
                            <span>Document</span>
                            <span>Untitled-1</span>
                        </DocLines>
                    </DocSummary>
                    <SectionHead><OpenTri />Publish</SectionHead>
                    <Block $height={52} $top={10} $gap={3}>
                        <FieldRow $height={14}>
                            <FieldLabel>Profile:</FieldLabel>Default
                        </FieldRow>
                        <FieldRow>
                            <FieldLabel />
                            <PlainButton $width={119}>Publish Settings...</PlainButton>
                        </FieldRow>
                    </Block>
                    <Block $height={61} $top={6} $gap={11}>
                        <FieldRow>
                            <FieldLabel>Target:</FieldLabel>
                            <Select>Flash Player 11.7<SelectCaret><DownCaret /></SelectCaret></Select>
                        </FieldRow>
                        <FieldRow>
                            <FieldLabel>Script:</FieldLabel>
                            <Select>ActionScript 3.0<SelectCaret><DownCaret /></SelectCaret></Select>
                            <SideIcon><Icon name="wrench" size={15} /></SideIcon>
                        </FieldRow>
                    </Block>
                    <Block $height={37} $top={9} $last>
                        <FieldRow>
                            <FieldLabel>Class:</FieldLabel>
                            <ClassField />
                            <SideIcon><Icon name="dropSmall" size={14} /></SideIcon>
                        </FieldRow>
                    </Block>
                    <SectionHead><OpenTri />Properties</SectionHead>
                    <Block $height={32} $top={9}>
                        <FieldRow><FieldLabel>FPS:</FieldLabel><HotText $left={6}>24.00</HotText></FieldRow>
                    </Block>
                    <Block $height={26} $top={5}>
                        <FieldRow>
                            <FieldLabel>Size:</FieldLabel>
                            <HotText $left={6}>550</HotText>
                            <SizeSep $width={46}>x</SizeSep>
                            <HotText>400</HotText>
                            <SizeSep $width={66}>px</SizeSep>
                            <SideIcon $left={20}><Icon name="wrench" size={15} /></SideIcon>
                        </FieldRow>
                    </Block>
                    <Block $height={38} $top={6} $last>
                        <FieldRow><FieldLabel>Stage:</FieldLabel><StageSwatch /></FieldRow>
                    </Block>
                    <SectionHead><OpenTri />SWF History</SectionHead>
                    <HistoryBody>
                        <PlainButton $width={39} $disabled>Log</PlainButton>
                        <PlainButton $width={48} $disabled>Clear</PlainButton>
                    </HistoryBody>
                    <SectionHead><ClosedTri />Accessibility</SectionHead>
                </Panel>

                <Tools>
                    <CollapseStrip><Tiny /><Tiny /></CollapseStrip>
                    <ToolsHead><MenuTri /><MenuLines /></ToolsHead>
                    <ToolGroup $height={143} $top={1}>
                        <Tool $active><Icon name="select" /></Tool>
                        <Tool><Icon name="subselect" /></Tool>
                        <Tool $corner><Icon name="transform" /></Tool>
                        <Tool $corner><Icon name="sphere" /></Tool>
                        <Tool $corner><Icon name="lasso" /></Tool>
                    </ToolGroup>
                    <ToolGroup $height={229} $top={1}>
                        <Tool $corner><Icon name="pen" /></Tool>
                        <Tool><SerifT>T</SerifT></Tool>
                        <Tool><Icon name="line" /></Tool>
                        <Tool $corner><Icon name="rect" /></Tool>
                        <Tool $corner><Icon name="oval" /></Tool>
                        <Tool><Icon name="poly" /></Tool>
                        <Tool><Icon name="pencil" /></Tool>
                        <Tool><Icon name="brush" /></Tool>
                    </ToolGroup>
                    <ToolGroup $height={114} $top={1}>
                        <Tool><Icon name="bucket" /></Tool>
                        <Tool><Icon name="ink" /></Tool>
                        <Tool><Icon name="dropper" /></Tool>
                        <Tool><Icon name="eraser" /></Tool>
                    </ToolGroup>
                    <ToolGroup $height={63} $top={3}>
                        <Tool><Icon name="hand" /></Tool>
                        <Tool><Icon name="zoom" /></Tool>
                    </ToolGroup>
                    <ToolGroup $height={109} $top={4} $last>
                        <ColorSlot><Icon name="penSmall" size={16} /></ColorSlot>
                        <ColorChip />
                        <ColorSlot><Icon name="bucketSmall" size={16} /></ColorSlot>
                        <ColorChip />
                        <SwapRow>
                            <Icon name="swapColors" size={12} />
                            <Icon name="swapArrows" size={13} />
                        </SwapRow>
                    </ToolGroup>
                </Tools>
            </Workspace>
        </Root>
    );
};

export default App;
